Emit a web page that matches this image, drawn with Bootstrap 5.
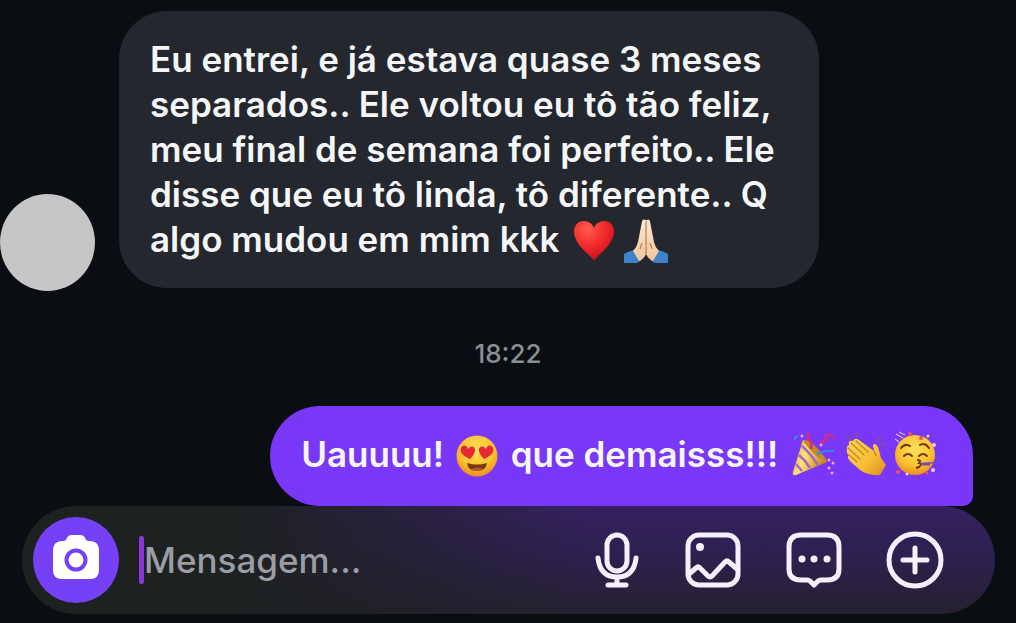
<!DOCTYPE html>
<html lang="pt-BR">
<head>
<meta charset="utf-8">
<meta name="viewport" content="width=device-width, initial-scale=1">
<title>Mensagens</title>
<link href="https://cdn.jsdelivr.net/npm/bootstrap@5.3.0/dist/css/bootstrap.min.css" rel="stylesheet">
<style>
body{background:#0a0d12;font-family:Inter,"Liberation Sans",sans-serif;color:#f5f6f8}
.chat{padding-top:11px}
.incoming{gap:24px}
.avatar{width:95px;height:97px;background:#c6c6c6;margin-bottom:-3px}
.bubble{font-size:35px;font-weight:600;line-height:45px}
.bubble-in{background:#24272e;border-radius:48px;padding:26px 24px 26px 31px;width:700px}
.bubble-out{background:#7937f7;border-radius:50px 50px 10px 50px;padding:26px 33px 29px 31px;margin-right:43px}
.stamp{font-size:26px;line-height:36px;font-weight:500;color:#8b8e94;margin:48px 0 34px}
.emoji{width:46px;height:46px;margin:-4px 0;vertical-align:-8px}
.emoji-face{margin-right:3px}
.emoji-row{gap:6px;margin:-4px 0 -4px 3px;vertical-align:-10px}
.emoji-row .emoji{margin:0}
.composer{margin:0 21px 8px 22px;padding:11px 51px 11px 11px;background:linear-gradient(90deg,#1d2120 0,#1d2120 22%,#1d212000 58%),linear-gradient(180deg,#35215f 0,#2d2050 45%,#25212f 100%)}
.camera{width:86px;height:86px;background:#7640f6}
.caret{width:5px;height:48px;background:#8b35da;margin-left:20px;border-radius:2px}
.field{background:none!important;border:0;box-shadow:none!important;color:#f5f6f8!important;font-size:35px;font-weight:500;line-height:46px;min-width:0}
.field::placeholder{color:#9b9da5;opacity:1}
.tools{gap:43px}
.tool{width:58px;height:58px}
.tool-mic{width:48px}
.line{fill:none;stroke:#f5f0fd;stroke-width:5;stroke-linecap:round;stroke-linejoin:round}
</style>
</head>
<body>
<svg width="0" height="0" class="position-absolute" aria-hidden="true">
<defs>
<radialGradient id="red" cx=".35" cy=".2" r=".85"><stop offset="0" stop-color="#ff5a50"/><stop offset=".55" stop-color="#f0282a"/><stop offset="1" stop-color="#bd0d18"/></radialGradient>
<radialGradient id="yellow" cx=".5" cy=".35" r=".65"><stop offset="0" stop-color="#ffe15a"/><stop offset=".65" stop-color="#fcc231"/><stop offset="1" stop-color="#eb8c20"/></radialGradient>
<linearGradient id="gold" x2="1" y2="1"><stop offset="0" stop-color="#fbd55a"/><stop offset=".6" stop-color="#f8bd35"/><stop offset="1" stop-color="#d58b1d"/></linearGradient>
<linearGradient id="cone" x2="1" y2=".4"><stop offset="0" stop-color="#d99b2b"/><stop offset=".45" stop-color="#ffe37a"/><stop offset="1" stop-color="#c98418"/></linearGradient>
<linearGradient id="skin" x2="0" y2="1"><stop offset="0" stop-color="#ffe8cf"/><stop offset="1" stop-color="#f0c49b"/></linearGradient>
</defs>
</svg>
<main class="chat min-vh-100 d-flex flex-column">
  <div class="incoming d-flex align-items-end">
    <div class="avatar rounded-circle flex-shrink-0" role="img" aria-label="Foto do perfil"></div>
    <div class="bubble bubble-in">Eu entrei, e já estava quase 3 meses<br>separados.. Ele voltou eu tô tão feliz,<br>meu final de semana foi perfeito.. Ele<br>disse que eu tô linda, tô diferente.. Q<br>algo mudou em mim kkk
      <svg class="emoji" viewBox="0 0 46 46" role="img" aria-label="Coração"><path fill="url(#red)" d="M26 43C24 38 6 27 6 14C6 7 10 3 15.500 3C20 3 24 5 26 10C28 5 32 3 36 3C42 3 46 7 46 14C46 27 28 38 26 43Z"/></svg>
      <svg class="emoji" viewBox="0 0 46 46" role="img" aria-label="Mãos unidas"><path fill="#3e82cc" d="M1 36Q6 33 11 32L19 42 14 45H1ZM45 36Q40 33 35 32L27 42 32 45H45Z"/><path fill="url(#skin)" d="M22.500 2Q19 0 18.500 6L15 24Q14 29 10 33L16 43Q21 41 23 36 25 41 30 43L36 33Q32 29 31 24L27.500 6Q27 0 23.500 2Z"/><path d="M23 3V36M19 25L17 31M27 25L29 31" fill="none" stroke="#b97e55" stroke-width="1.200"/></svg>
    </div>
  </div>
  <time class="stamp text-center d-block">18:22</time>
  <div class="bubble bubble-out align-self-end">Uauuuu!
    <svg class="emoji emoji-face" viewBox="0 0 46 46" role="img" aria-label="Olhos de coração"><circle cx="24" cy="23" r="20.500" fill="url(#yellow)"/><path fill="#e62a35" d="M17 26C13 24 6 21 8 15 10 11 14 12 15 16 18 11 23 14 22 18 21 22 19 24 17 26ZM31 26C35 24 42 21 40 15 38 11 34 12 33 16 30 11 25 14 26 18 27 22 29 24 31 26Z"/><path fill="#7a390e" d="M14 30Q24 33 34 30 33 38 24 38 15 38 14 30Z"/><path fill="#b85a28" d="M18 36Q24 33 30 36 27 38 24 38 20 38 18 36Z"/></svg>
    que demaisss!!!
    <span class="emoji-row d-inline-flex"><svg class="emoji" viewBox="0 0 46 46" role="img" aria-label="Festa"><path fill="url(#cone)" d="M3 41L13 9Q18 10 25 16T37 31L6 44Q2 45 3 41Z"/><path d="M12 15Q20 22 28 34M9 24Q15 29 20 37M6 33L12 40" fill="none" stroke="#a06bc4" stroke-width="2.500"/><path d="M13 9Q19 8 27 17T37 30Q28 28 21 20T13 9" fill="#c28a26"/><path d="M21 18Q23 10 18 8 17 3 21 3M32 13Q32 9 36 9 34 4 38 4T44 7" fill="none" stroke="#d42c86" stroke-width="2.500"/><path d="M27 23Q35 19 44 20M5 9Q4 5 8 6" fill="none" stroke="#3489ef" stroke-width="2"/><g fill="#f6a3d7"><circle cx="31" cy="14" r="1.500"/><circle cx="39" cy="29" r="1.500"/><circle cx="43" cy="32" r="1.500"/><circle cx="39" cy="37" r="1.500"/><circle cx="42" cy="42" r="1.500"/><circle cx="12" cy="5" r="1.500"/></g></svg><svg class="emoji" viewBox="0 0 46 46" role="img" aria-label="Aplauso"><path d="M5 5L9 8M14 2L15 6M36 9L40 6M39 14L43 13" stroke="#8b5770" stroke-width="2"/><path fill="url(#gold)" d="M9 31Q4 26 7 24 4 22 5 19 4 15 7 14 6 9 11 10 13 6 17 9L32 20 31 15Q32 10 36 16L39 27 44 34 38 44Q26 45 18 39Z"/><path d="M7 24L15 31M6 17L18 28M9 12L22 24M14 10L26 21M32 20L34 25" fill="none" stroke="#c98520" stroke-width="1.300" stroke-linecap="round"/></svg><svg class="emoji" viewBox="0 0 46 46" role="img" aria-label="Rosto festejando"><circle cx="21" cy="24" r="20" fill="url(#yellow)"/><path d="M7 17Q11 12 16 15M26 14Q31 11 35 17M10 25Q14 21 18 25M25 25Q29 21 33 25" fill="none" stroke="#713b13" stroke-width="2" stroke-linecap="round"/><path d="M23 29Q28 29 25 32 29 33 25 36L22 37" fill="none" stroke="#713b13" stroke-width="2"/><path d="M27 33L45 31" stroke="#7452ab" stroke-width="1.500"/><path d="M27 33H36" stroke="#7452ab" stroke-width="3"/><path d="M2 3L9 7M5 1L11 4M1 8L5 11" stroke="#d4b6ef" stroke-width="1.200"/><g fill="#ee4f5c"><circle cx="16" cy="3" r="2"/><circle cx="27" cy="7" r="2"/><circle cx="4" cy="41" r="2"/><circle cx="33" cy="42" r="1.500"/></g><g fill="#f5c8de"><circle cx="34" cy="5" r="1.500"/><circle cx="40" cy="14" r="2"/><circle cx="39" cy="39" r="2"/><circle cx="13" cy="43" r="1.500"/></g></svg></span>
  </div>
  <form class="composer rounded-pill d-flex align-items-center">
    <button type="button" class="camera btn rounded-circle border-0 p-0 flex-shrink-0" aria-label="Câmera"><svg class="d-block" width="86" height="86" viewBox="0 0 86 86" aria-hidden="true"><path fill="#fff" d="M29 24H31Q33 24 34 21 35 18 39 18H47Q51 18 52 21 53 24 55 24H57Q66 24 66 34V53Q66 62 57 62H29Q20 62 20 53V34Q20 24 29 24Z"/><circle cx="43" cy="43" r="9.500" fill="#fff" stroke="#7640f6" stroke-width="4"/></svg></button>
    <span class="caret flex-shrink-0"></span>
    <input type="text" class="field form-control flex-grow-1 p-0" placeholder="Mensagem..." aria-label="Mensagem">
    <div class="tools d-flex flex-shrink-0">
      <button type="button" class="tool tool-mic btn border-0 p-0" aria-label="Gravar áudio"><svg class="d-block" width="48" height="58" viewBox="0 0 48 58" aria-hidden="true"><g class="line"><rect x="14" y="4" width="20" height="36" rx="10"/><path d="M5 27Q7 46 24 46T43 27M24 46V54M15 54H33"/></g></svg></button>
      <button type="button" class="tool btn border-0 p-0" aria-label="Enviar foto"><svg class="d-block" width="58" height="58" viewBox="0 0 58 58" aria-hidden="true"><g class="line"><rect x="4" y="4" width="50" height="50" rx="11"/><path d="M5 43L12 37Q14 35 16 37L24 45Q26 47 28 45L41 31Q43 29 45 31L53 38"/></g><circle cx="16" cy="16" r="4" fill="#f5f0fd"/></svg></button>
      <button type="button" class="tool btn border-0 p-0" aria-label="Respostas prontas"><svg class="d-block" width="58" height="58" viewBox="0 0 58 58" aria-hidden="true"><path class="line" d="M16 4H42Q54 4 54 16V38Q54 49 42 49H36Q34 49 33 50L29 54 25 50Q24 49 22 49H16Q4 49 4 38V16Q4 4 16 4Z"/><g fill="#f5f0fd"><circle cx="17" cy="28" r="3.500"/><circle cx="29" cy="28" r="3.500"/><circle cx="42" cy="28" r="3.500"/></g></svg></button>
      <button type="button" class="tool btn border-0 p-0" aria-label="Mais opções"><svg class="d-block" width="58" height="58" viewBox="0 0 58 58" aria-hidden="true"><g class="line"><circle cx="29" cy="29" r="26"/><path d="M29 17V41M17 29H41"/></g></svg></button>
    </div>
  </form>
</main>
<script src="https://cdn.jsdelivr.net/npm/bootstrap@5.3.0/dist/js/bootstrap.bundle.min.js"></script>
</body>
</html>
